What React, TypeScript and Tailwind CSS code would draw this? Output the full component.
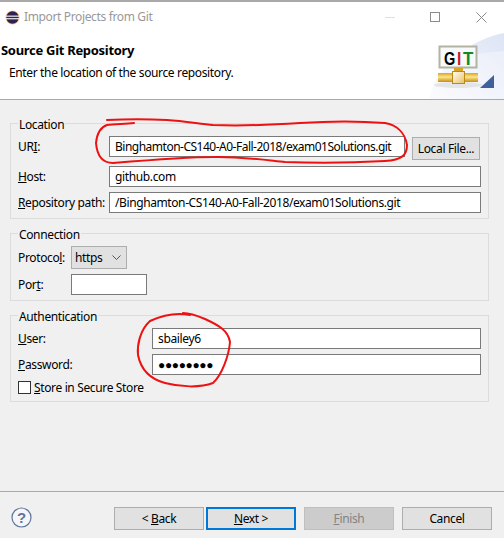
const font = "[font-family:'Noto_Sans',sans-serif]"

function Group({ title, className, children }: { title: string; className?: string; children: React.ReactNode }) {
  return (
    <div className={`border border-[#dcdcdc] px-[7px] ${className ?? ''}`}>
      <div className="-mt-[7px] mb-[3px] h-[16px] w-fit bg-[#f0f0f0] px-px text-[12px] leading-[16px]">{title}</div>
      {children}
    </div>
  )
}

function Field({ value, className }: { value?: string; className?: string }) {
  return (
    <div className={`h-[21px] border border-[#7a7a7a] bg-white px-[5px] text-[12px] leading-[19px] whitespace-nowrap overflow-hidden ${className ?? ''}`}>
      {value}
    </div>
  )
}

function Btn({ children, className }: { children: React.ReactNode; className?: string }) {
  return (
    <div className={`flex h-[23px] w-[90px] items-center justify-center text-[12px] ${className ?? ''}`}>
      {children}
    </div>
  )
}

function GitLogo() {
  return (
    <svg width="80" height="70" viewBox="0 0 80 70" className="absolute right-0 bottom-0">
      <defs>
        <linearGradient id="swoosh" x1="0" y1="1" x2="1" y2="0">
          <stop offset="0" stopColor="#f8f9fd" />
          <stop offset="1" stopColor="#dde4f5" />
        </linearGradient>
        <linearGradient id="pipe" x1="0" y1="0" x2="0" y2="1">
          <stop offset="0" stopColor="#dca41e" />
          <stop offset="0.45" stopColor="#fbe58a" />
          <stop offset="1" stopColor="#c98c10" />
        </linearGradient>
        <linearGradient id="joint" x1="0" y1="0" x2="1" y2="1">
          <stop offset="0" stopColor="#ffffff" />
          <stop offset="1" stopColor="#e8c060" />
        </linearGradient>
      </defs>
      <path d="M5 70 C14 32 50 10 80 4 L80 70 Z" fill="url(#swoosh)" />
      <path d="M18 33 C40 26 60 24 80 22 L80 70 L5 70 C8 55 12 42 18 33 Z" fill="#ffffff" opacity="0.35" />
      <ellipse cx="34" cy="56" rx="24" ry="3" fill="#d8d8d8" opacity="0.6" />
      <rect x="15.5" y="17.5" width="37" height="21" fill="#f7fafb" stroke="#b3b3a4" strokeWidth="2" />
      <text x="20" y="36" textLength="11" lengthAdjust="spacingAndGlyphs" fontFamily="'Liberation Sans',sans-serif" fontWeight="700" fontSize="19" fill="#000">G</text>
      <text x="33" y="36" fontFamily="'Liberation Sans',sans-serif" fontWeight="700" fontSize="19" textLength="4" lengthAdjust="spacingAndGlyphs" fill="#c8202a">I</text>
      <text x="39" y="36" textLength="10" lengthAdjust="spacingAndGlyphs" fontFamily="'Liberation Sans',sans-serif" fontWeight="700" fontSize="19" fill="#108a20">T</text>
      <rect x="30" y="39" width="9" height="4" fill="#d9a520" />
      <rect x="14" y="44" width="40" height="9" fill="url(#pipe)" />
      <rect x="28.5" y="42.5" width="12" height="12" fill="url(#joint)" stroke="#b98a18" />
      <path d="M56 59 L70 46 L70 59 Z" fill="#40609c" />
    </svg>
  )
}

export default function App() {
  return (
    <div className={`relative flex h-[538px] w-[504px] flex-col overflow-hidden bg-[#f0f0f0] tracking-[-0.36px] text-black ${font}`}>
      <div className="h-[3px] border-t-2 border-[#a9a9a9] bg-white" />

      {/* title bar */}
      <div className="flex h-[30px] items-center bg-white pb-[2px] pl-[5px]">
        <svg width="15" height="15" viewBox="0 0 15 15">
          <circle cx="7.5" cy="7.5" r="7" fill="#f7941e" opacity="0.55" />
          <circle cx="7.5" cy="7.5" r="6.2" fill="#2c2255" />
          <rect x="1" y="5.6" width="13" height="1.1" fill="#fff" />
          <rect x="1" y="8.2" width="13" height="1.1" fill="#fff" />
        </svg>
        <span className="ml-[4px] text-[12px] text-[#999999]">Import Projects from Git</span>
        <div className="mr-[35px] ml-auto h-px w-[10px] bg-[#e0e0e0]" />
        <div className="mr-[36px] h-[10px] w-[10px] border border-[#8c8c8c]" />
        <svg width="11" height="11" viewBox="0 0 11 11" className="mr-[17px]">
          <path d="M0.5 0.5 L10.5 10.5 M10.5 0.5 L0.5 10.5" stroke="#8c8c8c" strokeWidth="1" />
        </svg>
      </div>

      {/* banner */}
      <div className="relative h-[67px] border-b border-[#a9a9a9] bg-white pt-[9px]">
        <div className="pl-px text-[13px] leading-[16px] font-bold tracking-[-0.3px]">Source Git Repository</div>
        <div className="mt-[7px] pl-[9px] text-[12px] leading-[16px]">Enter the location of the source repository.</div>
        <GitLogo />
      </div>

      <div className="flex flex-1 flex-col px-[10px] pt-[23px] pr-[15px]">
        <Group title="Location" className="h-[96px]">
          <div className="flex h-[24px] items-start">
            <div className="w-[91px] text-[12px] leading-[21px]">UR<u>I</u>:</div>
            <Field value="Binghamton-CS140-A0-Fall-2018/exam01Solutions.git" className="w-[296px] tracking-[-0.5px]" />
            <div className="mt-px ml-[7px] flex h-[23px] w-[68px] items-center justify-center border border-[#adadad] bg-[#e1e1e1] text-[12px]">Local File...</div>
          </div>
          <div className="mt-[6px] flex">
            <div className="w-[91px] text-[12px] leading-[21px]"><u>H</u>ost:</div>
            <Field value="github.com" className="flex-1" />
          </div>
          <div className="mt-[5px] flex">
            <div className="w-[91px] text-[12px] leading-[21px] whitespace-nowrap"><u>R</u>epository path:</div>
            <Field value="/Binghamton-CS140-A0-Fall-2018/exam01Solutions.git" className="flex-1 tracking-[-0.4px]" />
          </div>
        </Group>

        <Group title="Connection" className="mt-[14px] h-[68px]">
          <div className="flex h-[23px] items-center">
            <div className="w-[53px] text-[12px]">Protoco<u>l</u>:</div>
            <div className="flex h-[23px] w-[56px] items-center justify-between border border-[#adadad] bg-[#e1e1e1] pr-[5px] pl-[3px] text-[12px]">
              https
              <svg width="9" height="6" viewBox="0 0 9 6"><path d="M0.5 0.5 L4.5 4.5 L8.5 0.5" fill="none" stroke="#555" /></svg>
            </div>
          </div>
          <div className="mt-[5px] flex">
            <div className="w-[53px] text-[12px] leading-[21px]">Por<u>t</u>:</div>
            <Field className="w-[76px]" />
          </div>
        </Group>

        <Group title="Authentication" className="mt-[14px] h-[87px]">
          <div className="flex">
            <div className="w-[134px] text-[12px] leading-[21px]"><u>U</u>ser:</div>
            <Field value="sbailey6" className="flex-1" />
          </div>
          <div className="mt-[5px] flex">
            <div className="w-[134px] text-[12px] leading-[21px]"><u>P</u>assword:</div>
            <Field value="●●●●●●●●" className="flex-1" />
          </div>
          <div className="mt-[6px] flex items-center">
            <div className="h-[13px] w-[13px] border border-[#333333] bg-white" />
            <div className="ml-[3px] text-[12px] leading-[13px]"><u>S</u>tore in Secure Store</div>
          </div>
        </Group>
      </div>

      {/* footer */}
      <div className="flex h-[47px] items-start border-t border-[#a9a9a9] pt-[15px] pl-[11px]">
        <svg width="21" height="21" viewBox="0 0 21 21">
          <circle cx="10.5" cy="10.5" r="9.5" fill="#f4f6fa" stroke="#5f7699" strokeWidth="1.2" />
          <text x="10.5" y="15.5" textAnchor="middle" fontFamily="'Liberation Sans',sans-serif" fontWeight="700" fontSize="15" fill="#5f7699">?</text>
        </svg>
        <Btn className="ml-[82px] border border-[#adadad] bg-[#e1e1e1]">&lt;&nbsp;<u>B</u>ack</Btn>
        <Btn className="ml-[2px] border-2 border-[#0078d7] bg-[#e1e1e1]"><u>N</u>ext &gt;</Btn>
        <Btn className="ml-[8px] border border-[#bfbfbf] bg-[#cccccc] text-[#838383]"><u>F</u>inish</Btn>
        <Btn className="ml-[8px] border border-[#adadad] bg-[#e1e1e1]">Cancel</Btn>
      </div>

      {/* red pen annotations drawn over the dialog */}
      <svg width="504" height="538" viewBox="0 0 504 538" className="pointer-events-none absolute top-0 left-0">
        <g fill="none" stroke="#ee1111" strokeWidth="2" strokeLinecap="round" strokeLinejoin="round">
          <path d="M107 120 C125 119 150 119 167 120 C185 121 200 124 213 125 C240 126 270 125 300 123 C330 121 360 121 385 123 C396 125 405 132 407 145 C407 155 402 160 385 161 C350 163 310 163 285 162 C265 160 235 156 213 157 C190 157 150 160 113 163 C102 163 97 155 96 143 C97 133 101 127 107 125 C115 124 125 124 134 123" />
          <path d="M190 315 C180 313 165 314 150 321 C140 330 137 345 138 355 C141 370 150 379 165 383 C180 387 200 388 213 383 C222 375 229 355 230 342 C228 330 218 325 205 319 C198 316 190 313 183 313" />
        </g>
      </svg>
    </div>
  )
}
